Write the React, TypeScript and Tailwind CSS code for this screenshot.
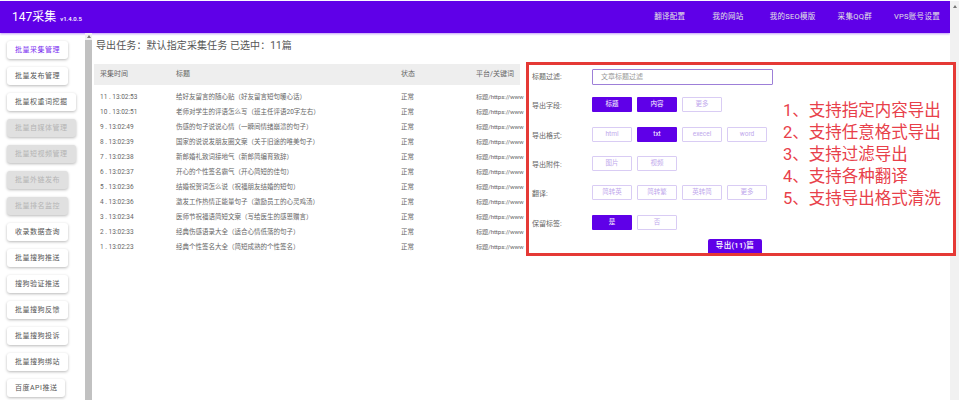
const sideItems = [
  { label: "批量采集管理", active: true },
  { label: "批量发布管理" },
  { label: "批量权重词挖掘" },
  { label: "批量自媒体管理", disabled: true },
  { label: "批量短视频管理", disabled: true },
  { label: "批量外链发布", disabled: true },
  { label: "批量排名监控", disabled: true },
  { label: "收录数据查询" },
  { label: "批量搜狗推送" },
  { label: "搜狗验证推送" },
  { label: "批量搜狗反馈" },
  { label: "批量搜狗投诉" },
  { label: "批量搜狗绑站" },
  { label: "百度API推送" },
];

const navItems = [
  { label: "翻译配置", cls: "" },
  { label: "我的网站", cls: "ml-[27px]" },
  { label: "我的SEO模版", cls: "ml-[26px]" },
  { label: "采集QQ群", cls: "ml-[22px]" },
  { label: "VPS账号设置", cls: "ml-[22px]" },
];

const rows = [
  ["11 . 13:02:53", "给好友留言的随心贴（好友留言短句暖心话）"],
  ["10 . 13:02:51", "老师对学生的评语怎么写（班主任评语20字左右）"],
  ["9 . 13:02:49", "伤感的句子说说心情（一瞬间情绪崩溃的句子）"],
  ["8 . 13:02:39", "国家的说说发朋友圈文案（关于旧途的唯美句子）"],
  ["7 . 13:02:38", "新郎婚礼致词接地气（新郎简编育致辞）"],
  ["6 . 13:02:37", "开心的个性签名霸气（开心简短的佳句）"],
  ["5 . 13:02:36", "结婚祝贺词怎么说（祝福朋友结婚的短句）"],
  ["4 . 13:02:36", "激发工作热情正能量句子（激励员工的心灵鸡汤）"],
  ["3 . 13:02:34", "医师节祝福语简短文案（写给医生的感恩赠言）"],
  ["2 . 13:02:33", "经典伤感语录大全（适合心情低落的句子）"],
  ["1 . 13:02:23", "经典个性签名大全（简短成熟的个性签名）"],
];

const optionRows = [
  { label: "导出字段:", options: ["标题", "内容", "更多"], on: [0, 1], cls: "mb-[15px]" },
  { label: "导出格式:", options: ["html", "txt", "execel", "word"], on: [1], cls: "mb-[14px]" },
  { label: "导出附件:", options: ["图片", "视频"], on: [], cls: "mb-[14px]" },
  { label: "翻译:", options: ["简转英", "简转繁", "英转简", "更多"], on: [], cls: "mb-[15px]" },
  { label: "保留标签:", options: ["是", "否"], on: [0], cls: "mb-[9px]" },
];

const notes = ["1、支持指定内容导出", "2、支持任意格式导出", "3、支持过滤导出", "4、支持各种翻译", "5、支持导出格式清洗"];

function SideButton({ label, active, disabled }: { label: string; active?: boolean; disabled?: boolean }) {
  return (
    <button
      className={`h-[18px] shrink-0 px-2 self-start whitespace-nowrap rounded-[3px] text-[7px] tracking-[0.5px] shadow-[0_1px_3px_rgba(0,0,0,0.28)] ${
        disabled ? "bg-[#e0e0e0] text-[#b4b4b4]" : "bg-white"
      } ${active ? "text-[#7a2cf0]" : ""} ${!active && !disabled ? "text-[#555]" : ""}`}
    >
      {label}
    </button>
  );
}

export default function App() {
  return (
    <div className="relative w-[959px] h-[400px] overflow-hidden bg-white pt-px font-['Roboto','Noto_Sans_CJK_SC',sans-serif]">
      <div className="flex h-full">
        <div className="flex flex-col w-[950px]">
          <header className="h-[32px] shrink-0 bg-[#5f00e8] flex items-center justify-between pl-[12px] pr-[10px] shadow-[0_1px_2px_rgba(98,0,238,0.4)]">
            <div className="flex items-baseline gap-[4px] text-white">
              <span className="text-[12px]">147采集</span>
              <span className="text-[6px] font-medium">v1.4.0.5</span>
            </div>
            <nav className="flex text-[7.5px] text-[#e4e4e4] tracking-[0.3px]">
              {navItems.map((n) => (
                <span key={n.label} className={n.cls}>
                  {n.label}
                </span>
              ))}
            </nav>
          </header>

          <div className="flex flex-1 min-h-0">
            <aside className="w-[85px] shrink-0 flex flex-col gap-2 pl-[7px] pt-[8px] overflow-hidden">
              {sideItems.map((s) => (
                <SideButton key={s.label} {...s} />
              ))}
            </aside>
            <div className="w-[7px] shrink-0 flex flex-col bg-[#c1c1c1]">
              <div className="h-[7px] bg-[#f1f1f1] flex items-center justify-center">
                <svg width="4" height="3" viewBox="0 0 4 3">
                  <path d="M2 0 L4 3 L0 3 Z" fill="#777" />
                </svg>
              </div>
            </div>

            <main className="flex-1 min-w-0 pl-[2px] overflow-hidden">
              <h1 className="pl-[2px] pt-[5px] h-[31px] text-[10px] tracking-[0.1px] leading-[16px] text-[#555] whitespace-nowrap">
                导出任务：默认指定采集任务 已选中：11篇
              </h1>
              <div className="w-[428px] text-[6.5px] text-[#666]">
                <div className="h-[21px] w-[426px] bg-[#eeeeee] flex items-center text-[7px]">
                  <span className="w-[82px] pl-[6px] shrink-0">采集时间</span>
                  <span className="w-[225px] shrink-0">标题</span>
                  <span className="w-[75px] shrink-0">状态</span>
                  <span className="whitespace-nowrap">平台/关键词</span>
                </div>
                <div className="pt-[5px]">
                  {rows.map(([time, title]) => (
                    <div key={time} className="h-[15px] flex items-center">
                      <span className="w-[82px] pl-[6px] shrink-0">{time}</span>
                      <span className="w-[225px] shrink-0 whitespace-nowrap">{title}</span>
                      <span className="w-[75px] shrink-0">正常</span>
                      <span className="whitespace-nowrap text-[6.2px] tracking-[-0.1px]">标题/https://www</span>
                    </div>
                  ))}
                </div>
              </div>
            </main>
          </div>
        </div>
        <div className="w-[9px] bg-[#f1f1f1] flex justify-center pt-[4px] pl-[1px]">
          <svg width="4" height="3" viewBox="0 0 4 3">
            <path d="M2 0 L4 3 L0 3 Z" fill="#777" />
          </svg>
        </div>
      </div>

      <section className="absolute left-[526px] top-[62px] w-[430px] h-[194px] border-[3px] border-[#e53935] bg-white flex pl-[3px] pt-[4px] text-[6.5px] text-[#666]">
        <div className="w-[244px] shrink-0">
          <div className="flex items-center h-[16px] mb-[12px]">
            <span className="w-[60px] shrink-0 text-[7px]">标题过滤:</span>
            <div className="w-[181px] h-[16px] shrink-0 border border-[#9d7fd8] rounded-[1px] pl-2 flex items-center text-[7px] text-[#9a9a9a]">
              文章标题过滤
            </div>
          </div>
          {optionRows.map((r) => (
            <div key={r.label} className={`flex items-center h-[15px] ${r.cls}`}>
              <span className="w-[60px] shrink-0 text-[7px] pt-[3px]">{r.label}</span>
              <div className="flex gap-[5px]">
                {r.options.map((o, i) => (
                  <span
                    key={o}
                    className={`w-[40px] h-[15px] flex items-center justify-center rounded-[1px] ${
                      r.on.includes(i) ? "bg-[#5f00e8] text-white" : "border border-[#d9ccf4] text-[#c0a8ec]"
                    }`}
                  >
                    {o}
                  </span>
                ))}
              </div>
            </div>
          ))}
          <button className="ml-[176px] w-[54px] h-[14px] bg-[#5f00e8] text-white text-[7.5px] font-medium tracking-[0.3px] rounded-t-[2px]">
            导出(11)篇
          </button>
        </div>
        <div className="pl-[7px] pt-[31px] text-[16.5px] leading-[22px] text-[#e8404a] whitespace-nowrap">
          {notes.map((n) => (
            <div key={n}>{n}</div>
          ))}
        </div>
      </section>
    </div>
  );
}
